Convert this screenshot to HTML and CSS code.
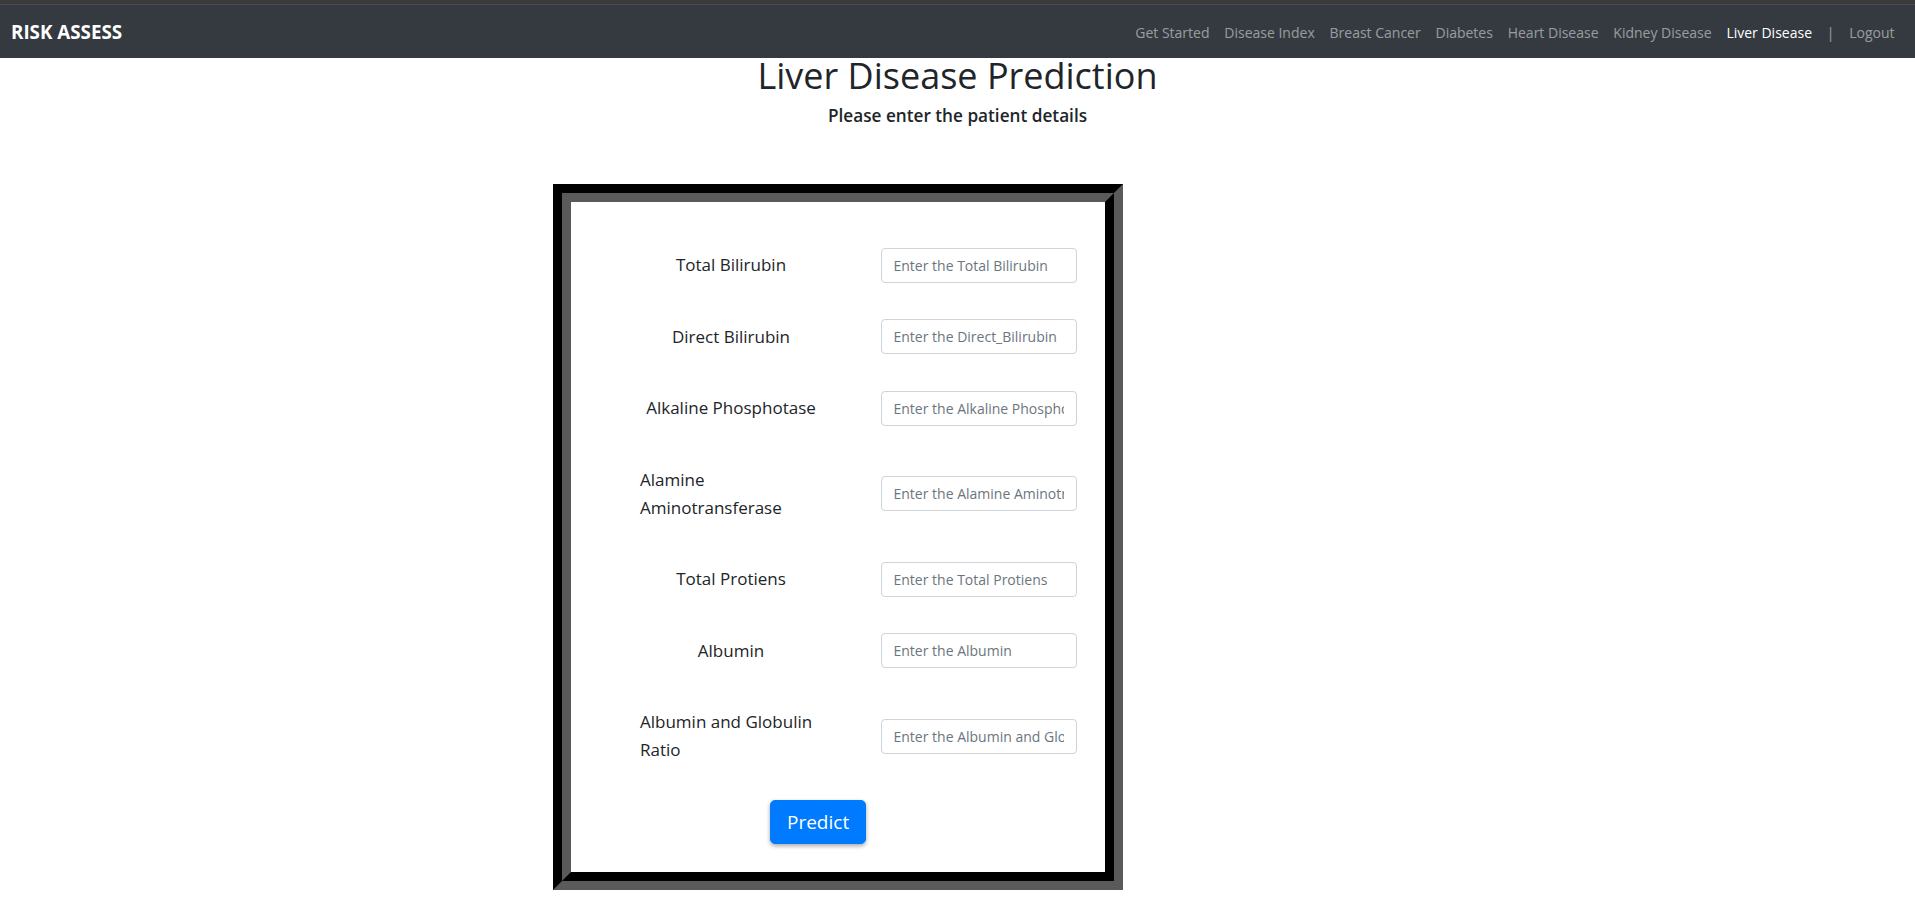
FILE: index.html
```html
<!DOCTYPE html>
<html lang="en">
<head>
<meta charset="utf-8">
<title>Liver Disease Prediction</title>
<link rel="stylesheet" href="styles.css">
</head>
<body>
<div class="topstrip"></div>
<nav class="navbar">
  <a class="brand" href="#">RISK ASSESS</a>
  <ul class="nav">
    <li><a class="nav-link" href="#">Get Started</a></li>
    <li><a class="nav-link" href="#">Disease Index</a></li>
    <li><a class="nav-link" href="#">Breast Cancer</a></li>
    <li><a class="nav-link" href="#">Diabetes</a></li>
    <li><a class="nav-link" href="#">Heart Disease</a></li>
    <li><a class="nav-link" href="#">Kidney Disease</a></li>
    <li><a class="nav-link active" href="#">Liver Disease</a></li>
    <li><span class="nav-link sep">|</span></li>
    <li><a class="nav-link" href="#">Logout</a></li>
  </ul>
</nav>
<main>
  <h1 class="title">Liver Disease Prediction</h1>
  <h5 class="subtitle">Please enter the patient details</h5>
  <div class="frame-wrap">
    <div class="frame-outer">
      <div class="frame-inner">
        <form class="form">
          <div class="row">
            <div class="cell-label"><label>Total Bilirubin</label></div>
            <input class="input" type="text" placeholder="Enter the Total Bilirubin">
          </div>
          <div class="row">
            <div class="cell-label"><label>Direct Bilirubin</label></div>
            <input class="input" type="text" placeholder="Enter the Direct_Bilirubin">
          </div>
          <div class="row">
            <div class="cell-label"><label>Alkaline Phosphotase</label></div>
            <input class="input" type="text" placeholder="Enter the Alkaline Phosphotase">
          </div>
          <div class="row">
            <div class="cell-label"><label>Alamine Aminotransferase</label></div>
            <input class="input" type="text" placeholder="Enter the Alamine Aminotransferase">
          </div>
          <div class="row">
            <div class="cell-label"><label>Total Protiens</label></div>
            <input class="input" type="text" placeholder="Enter the Total Protiens">
          </div>
          <div class="row">
            <div class="cell-label"><label>Albumin</label></div>
            <input class="input" type="text" placeholder="Enter the Albumin">
          </div>
          <div class="row">
            <div class="cell-label"><label>Albumin and Globulin Ratio</label></div>
            <input class="input" type="text" placeholder="Enter the Albumin and Globulin Ratio">
          </div>
          <div class="btn-row">
            <button class="btn" type="button">Predict</button>
          </div>
        </form>
      </div>
    </div>
  </div>
</main>
</body>
</html>
```
FILE: styles.css
```css
* { box-sizing: border-box; }
html, body { margin: 0; padding: 0; background: #fff; }
body {
  font-family: "Open Sans", "Noto Sans", sans-serif;
  color: #212529;
}
.topstrip {
  height: 5px;
  background: #3b3b3b;
  border-bottom: 1px solid #4a4a4a;
}
.navbar {
  height: 53px;
  background: #343a40;
  display: flex;
  align-items: center;
  justify-content: space-between;
  padding: 0 13px 0 11px;
}
.brand {
  color: #fff;
  font-weight: 700;
  font-size: 18.8px;
  text-decoration: none;
}
.nav {
  list-style: none;
  margin: 0;
  padding: 0;
  display: flex;
  align-items: center;
}
.nav-link {
  display: block;
  padding: 9px 7.4px 8px;
  font-size: 14px;
  color: rgba(255, 255, 255, 0.5);
  text-decoration: none;
}
.nav-link.active { color: #fff; }
.title {
  margin: 0;
  text-align: center;
  font-size: 36px;
  line-height: 36px;
  font-weight: 500;
}
.subtitle {
  margin: 10px 0 0;
  text-align: center;
  font-size: 17.2px;
  line-height: 24px;
  font-weight: 600;
}
.frame-wrap {
  padding: 56px 0 0 553px;
}
.frame-outer {
  width: 570px;
  border: 9px solid;
  border-color: #000 #5a5a5a #5a5a5a #000;
}
.frame-inner {
  border: 9px solid;
  border-color: #5a5a5a #000 #000 #5a5a5a;
  background: #fff;
  padding: 39px 0 28px 69px;
}
.form {
  display: flex;
  flex-direction: column;
  gap: 23.5px;
}
.row {
  display: flex;
  align-items: center;
  gap: 58.5px;
}
.cell-label {
  width: 182px;
  text-align: center;
  padding: 10px 0;
}
.cell-label label {
  display: inline-block;
  text-align: left;
  font-size: 17px;
  line-height: 28px;
  color: #212529;
}
.input {
  width: 196px;
  height: 35px;
  padding: 0 12px;
  font-family: inherit;
  font-size: 14px;
  color: #495057;
  border: 1px solid #ced4da;
  border-radius: 4px;
  background: #fff;
}
.input::placeholder { color: #6c757d; opacity: 1; }
.btn-row {
  padding-left: 130px;
  margin-top: 2px;
}
.btn {
  height: 44px;
  padding: 0 16px;
  font-family: inherit;
  font-size: 19px;
  color: #fff;
  background: #007bff;
  border: 1px solid #007bff;
  border-radius: 5px;
  box-shadow: 0 2px 4px rgba(0, 0, 0, 0.35);
}
```
